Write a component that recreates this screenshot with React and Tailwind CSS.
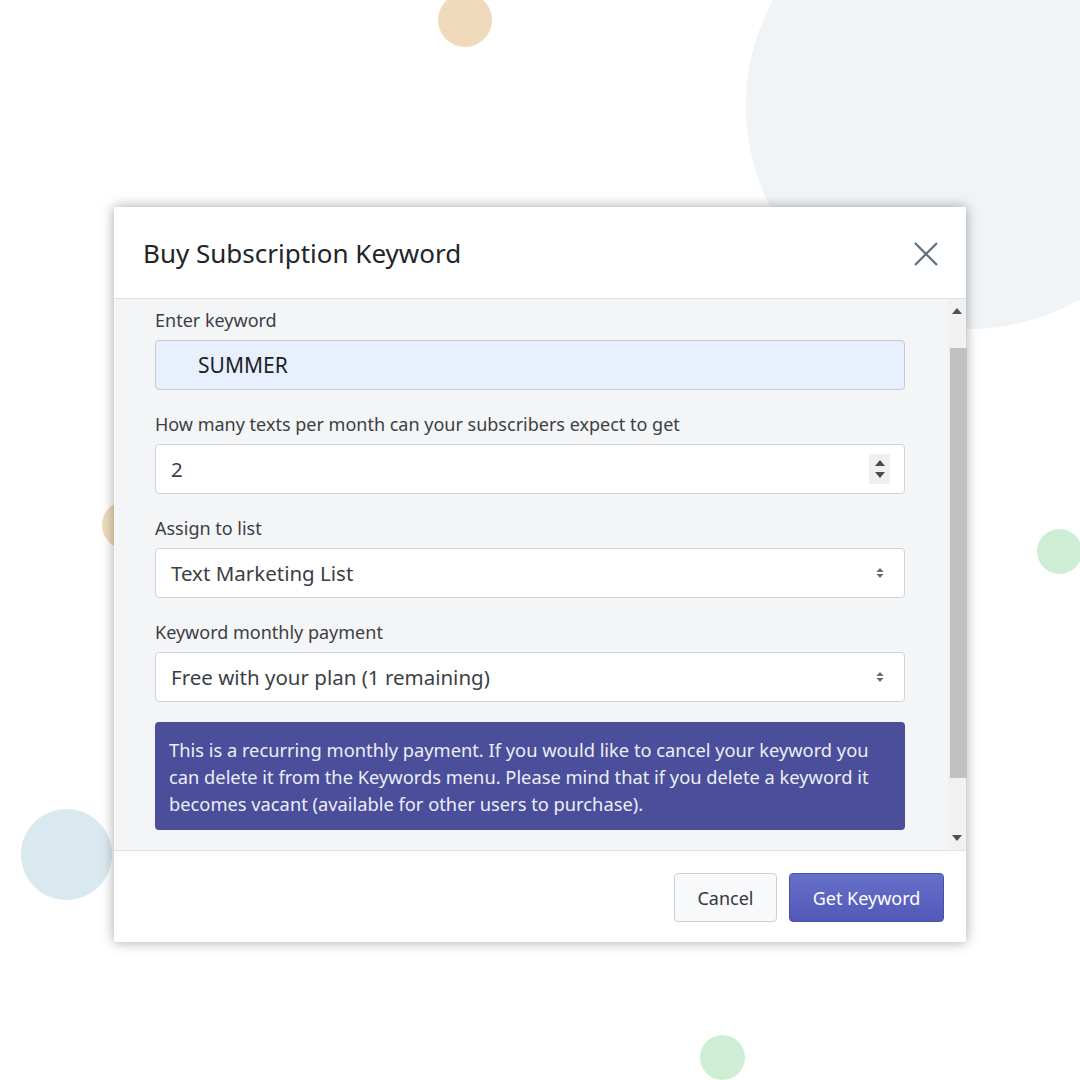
import React from "react";

const font = { fontFamily: '"Noto Sans", "Open Sans", sans-serif' };

function SelectArrows() {
  return (
    <svg width="10" height="16" viewBox="0 0 10 16" className="text-[#5b6b7b]">
      <path d="M5 3 L8.5 7 L1.5 7 Z" fill="currentColor" />
      <path d="M5 13 L8.5 9 L1.5 9 Z" fill="currentColor" />
    </svg>
  );
}

function Field({ label, children }) {
  return (
    <div className="flex flex-col">
      <label className="h-6 mb-[6px] text-[18px] leading-[20px] text-[#3b3f44]">{label}</label>
      {children}
    </div>
  );
}

function Scrollbar() {
  return (
    <div className="w-[18px] shrink-0 bg-[#f1f1f1] flex flex-col items-center">
      <div className="h-[24px] w-full flex items-center justify-center">
        <svg width="10" height="6" viewBox="0 0 10 6">
          <path d="M5 0 L10 6 L0 6 Z" fill="#505050" />
        </svg>
      </div>
      <div className="mt-[25px] h-[430px] w-[17px] ml-[2px] bg-[#c1c1c1]" />
      <div className="flex-1" />
      <div className="h-[24px] w-full flex items-center justify-center">
        <svg width="10" height="6" viewBox="0 0 10 6">
          <path d="M5 6 L10 0 L0 0 Z" fill="#505050" />
        </svg>
      </div>
    </div>
  );
}

function BuyKeywordModal() {
  return (
    <div className="relative w-[852px] bg-white shadow-[0_0_12px_rgba(0,0,0,0.35)]" style={font}>
      <div className="h-[92px] flex items-center justify-between pl-[29px] pr-[28px] border-b border-[#dee2e6]">
        <h2 className="text-[26px] text-[#212529] pt-[2px]">Buy Subscription Keyword</h2>
        <svg width="24" height="24" viewBox="0 0 24 24" className="mt-[2px]">
          <path d="M1 1 L23 23 M23 1 L1 23" stroke="#5f6f7e" strokeWidth="2.2" />
        </svg>
      </div>

      <div className="h-[551px] flex bg-[#f4f5f7]">
        <div className="flex-1 pl-[41px] pr-[43px] pt-[11px] flex flex-col gap-6">
          <Field label="Enter keyword">
            <div className="h-[50px] rounded border border-[#c4cbd4] bg-[#e8f0fe] flex items-center pl-[42px] pt-[2px] text-[21px] text-[#1d1f22]">
              SUMMER
            </div>
          </Field>
          <Field label="How many texts per month can your subscribers expect to get">
            <div className="h-[50px] rounded border border-[#ced4da] bg-white flex items-center justify-between pl-[15px] pr-[14px] text-[20.5px] text-[#3b3f44]">
              <span>2</span>
              <div className="w-[21px] h-[30px] bg-[#f0f0f0] flex flex-col items-center justify-center gap-[6px]">
                <svg width="10" height="6" viewBox="0 0 10 6">
                  <path d="M5 0 L10 6 L0 6 Z" fill="#4a4a4a" />
                </svg>
                <svg width="10" height="6" viewBox="0 0 10 6">
                  <path d="M5 6 L10 0 L0 0 Z" fill="#4a4a4a" />
                </svg>
              </div>
            </div>
          </Field>
          <Field label="Assign to list">
            <div className="h-[50px] rounded border border-[#ced4da] bg-white flex items-center justify-between pl-[15px] pr-[19px] text-[20.5px] text-[#3b3f44]">
              <span>Text Marketing List</span>
              <SelectArrows />
            </div>
          </Field>
          <Field label="Keyword monthly payment">
            <div className="h-[50px] rounded border border-[#ced4da] bg-white flex items-center justify-between pl-[15px] pr-[19px] text-[20.5px] text-[#3b3f44]">
              <span>Free with your plan (1 remaining)</span>
              <SelectArrows />
            </div>
          </Field>
          <div className="-mt-1 h-[108px] rounded bg-[#4b4e9a] px-[14px] pt-[14px] text-[18.3px] leading-[27px] text-[#eceef8]">
            This is a recurring monthly payment. If you would like to cancel your keyword you can delete it from the Keywords menu. Please mind that if you delete a keyword it becomes vacant (available for other users to purchase).
          </div>
        </div>
        <Scrollbar />
      </div>

      <div className="h-[92px] border-t border-[#dee2e6] flex items-center justify-end gap-3 pr-[22px] pt-[2px]">
        <button className="h-[49px] w-[103px] rounded border border-[#c9d0d8] bg-[#f8f9fb] text-[18px] text-[#33383e] pt-[2px]">
          Cancel
        </button>
        <button className="h-[49px] w-[155px] rounded border border-[#4a50aa] bg-gradient-to-b from-[#6670c9] to-[#5259b8] text-[18px] text-white pt-[2px]">
          Get Keyword
        </button>
      </div>
    </div>
  );
}

export default function App() {
  return (
    <div className="relative w-[1080px] h-[1080px] overflow-hidden bg-white">
      <div className="absolute left-[746px] top-[-117px] w-[446px] h-[446px] rounded-full bg-[#f0f4f7]" />
      <div className="absolute left-[438px] top-[-7px] w-[54px] h-[54px] rounded-full bg-[#efdbbb]" />
      <div className="absolute left-[102px] top-[501px] w-[48px] h-[48px] rounded-full bg-[#efdbbb]" />
      <div className="absolute left-[21px] top-[809px] w-[91px] h-[91px] rounded-full bg-[#dae8ef]" />
      <div className="absolute left-[1037px] top-[529px] w-[45px] h-[45px] rounded-full bg-[#cdeed4]" />
      <div className="absolute left-[700px] top-[1035px] w-[45px] h-[45px] rounded-full bg-[#cdeed4]" />
      <div className="relative flex justify-center pt-[207px]">
        <BuyKeywordModal />
      </div>
    </div>
  );
}
